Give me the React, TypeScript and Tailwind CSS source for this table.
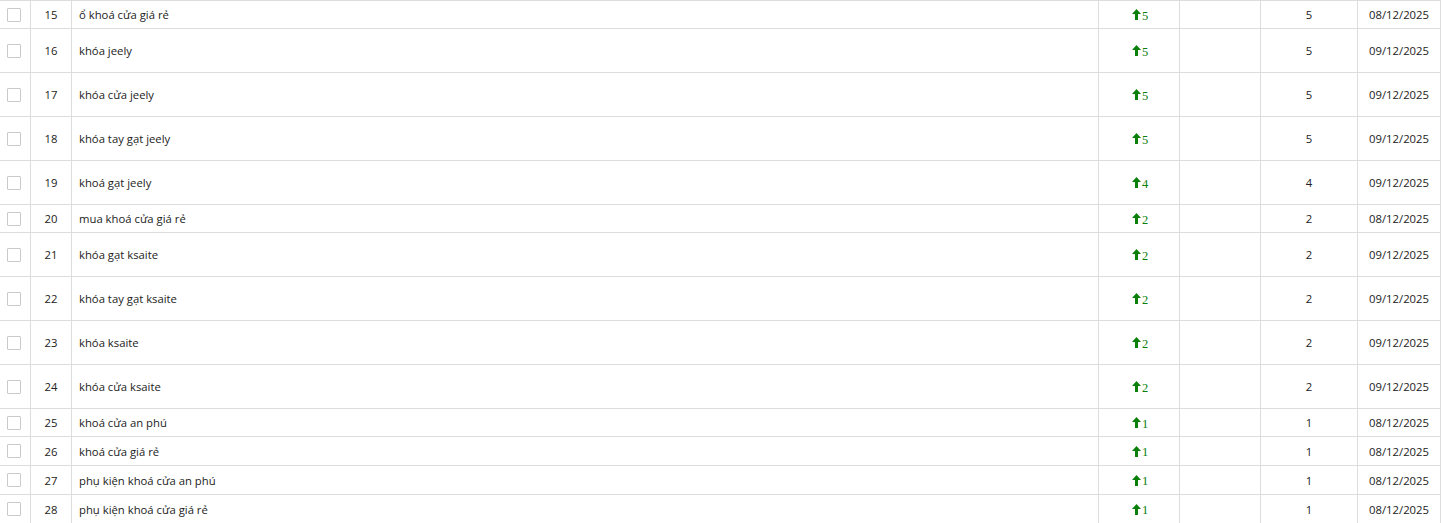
const rows = [
  { id: 15, kw: "ổ khoá cửa giá rẻ", v: 5, date: "08/12/2025", h: "h-[28px]" },
  { id: 16, kw: "khóa jeely", v: 5, date: "09/12/2025", h: "h-[44px]" },
  { id: 17, kw: "khóa cửa jeely", v: 5, date: "09/12/2025", h: "h-[44px]" },
  { id: 18, kw: "khóa tay gạt jeely", v: 5, date: "09/12/2025", h: "h-[44px]" },
  { id: 19, kw: "khoá gạt jeely", v: 4, date: "09/12/2025", h: "h-[44px]" },
  { id: 20, kw: "mua khoá cửa giá rẻ", v: 2, date: "08/12/2025", h: "h-[28px]" },
  { id: 21, kw: "khóa gạt ksaite", v: 2, date: "09/12/2025", h: "h-[44px]" },
  { id: 22, kw: "khóa tay gạt ksaite", v: 2, date: "09/12/2025", h: "h-[44px]" },
  { id: 23, kw: "khóa ksaite", v: 2, date: "09/12/2025", h: "h-[44px]" },
  { id: 24, kw: "khóa cửa ksaite", v: 2, date: "09/12/2025", h: "h-[44px]" },
  { id: 25, kw: "khoá cửa an phú", v: 1, date: "08/12/2025", h: "h-[28px]" },
  { id: 26, kw: "khoá cửa giá rẻ", v: 1, date: "08/12/2025", h: "h-[29px]" },
  { id: 27, kw: "phụ kiện khoá cửa an phú", v: 1, date: "08/12/2025", h: "h-[29px]" },
  { id: 28, kw: "phụ kiện khoá cửa giá rẻ", v: 1, date: "08/12/2025", h: "h-[29px]" },
]

function UpArrow() {
  return (
    <svg width="9" height="11" viewBox="0 0 9 11" className="shrink-0">
      <path d="M4.5 0 L9 5 L6 5 L6 11 L3 11 L3 5 L0 5 Z" fill="#0a800a" />
    </svg>
  )
}

export default function App() {
  return (
    <div className="w-[1441px] bg-white text-[11.3px] text-[#222] font-['Open_Sans',sans-serif]">
      <div className="border-t border-[#ddd]">
        {rows.map((r) => (
          <div
            key={r.id}
            className={`grid grid-cols-[31px_41px_1027px_81px_81px_97px_83px] border-b border-[#ddd] ${r.h}`}
          >
            {/* checkbox */}
            <div className="border-r border-[#ddd] flex items-center pl-[7px]">
              <div className="w-[14px] h-[14px] border border-[#cacaca] bg-white rounded-[1px]" />
            </div>
            <div className="border-r border-[#ddd] flex items-center justify-center pt-[2px]">{r.id}</div>
            <div className="border-r border-[#ddd] flex items-center pl-[7px] pt-[2px]">{r.kw}</div>
            <div className="border-r border-[#ddd] flex items-center justify-center">
              <div className="flex items-center gap-[1px] pl-[2px]">
                <UpArrow />
                <span className="font-['Liberation_Serif',serif] text-[12.5px] text-[#0a800a] leading-none mt-[3px]">{r.v}</span>
              </div>
            </div>
            <div className="border-r border-[#ddd]" />
            <div className="border-r border-[#ddd] flex items-center justify-center pt-[2px]">{r.v}</div>
            <div className="border-r border-[#ddd] flex items-center justify-center pt-[2px]">{r.date}</div>
          </div>
        ))}
      </div>
    </div>
  )
}
